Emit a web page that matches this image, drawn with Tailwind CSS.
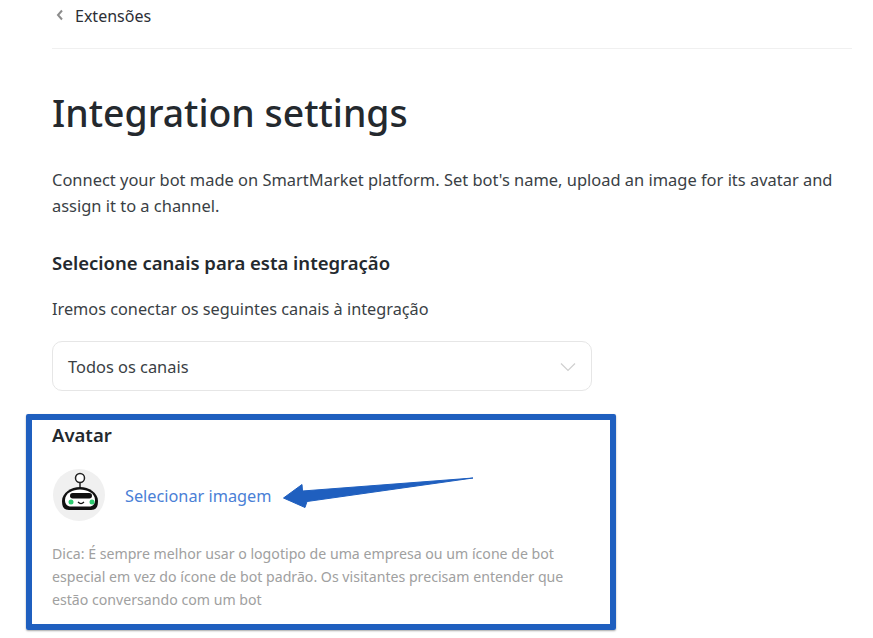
<!DOCTYPE html>
<html lang="en">
<head>
  <meta charset="UTF-8" />
  <title>Integration settings</title>
  <script src="https://cdn.jsdelivr.net/npm/@tailwindcss/browser@4"></script>
</head>
<body class="bg-white font-['Noto_Sans',sans-serif] text-[#24292e] overflow-hidden">
  <div class="w-[873px] h-[638px] overflow-hidden">
    <!-- Back link -->
    <div class="mx-[52px] w-[800px] h-[49px] border-b border-[#f0f0f0] flex items-start pt-[5px]">
      <svg class="w-[14px] h-[14px] mt-[3px] ml-[1px]" viewBox="0 0 14 14" fill="none" stroke="#8c8c8c" stroke-width="2">
        <path d="M9 2.5 L5 7 L9 11.5" />
      </svg>
      <span class="ml-[8px] text-[16px] leading-[22px] text-[#2c2f36]">Extensões</span>
    </div>

    <div class="pl-[52px]">
      <h1 class="mt-[38px] text-[37.4px] leading-[52px] font-medium text-[#24292e]">Integration settings</h1>
      <p class="mt-[28px] w-[805px] text-[16.45px] leading-[26px] text-[#3a3f45]">Connect your bot made on SmartMarket platform. Set bot's name, upload an image for its avatar and assign it to a channel.</p>
      <h2 class="mt-[30px] text-[18.5px] leading-[28px] font-semibold">Selecione canais para esta integração</h2>
      <p class="mt-[20px] text-[16.3px] leading-[24px] text-[#3a3f45]">Iremos conectar os seguintes canais à integração</p>

      <!-- Select -->
      <div class="mt-[20px] w-[540px] h-[50px] border border-[#e6e6e6] rounded-[10px] flex items-center justify-between pl-[15px] pr-[15px]">
        <span class="pt-[2px] text-[16.4px] text-[#3a3f45]">Todos os canais</span>
        <svg class="w-[16px] h-[10px] mt-[2px]" viewBox="0 0 16 10" fill="none" stroke="#cfcfcf" stroke-width="1.2">
          <path d="M1 1.5 L8 8.5 L15 1.5" />
        </svg>
      </div>
    </div>

    <!-- Highlighted avatar block -->
    <section class="mt-[23px] ml-[26px] w-[590px] h-[216px] border-[6px] border-[#1f5fbf] rounded-[2px] pl-[20px] shadow-[0_1px_2px_rgba(0,0,0,0.35)]">
      <h2 class="mt-[1px] text-[18.5px] leading-[28px] font-semibold">Avatar</h2>
      <div class="mt-[20px] flex items-center relative">
        <div class="ml-[1px] w-[52px] h-[52px] rounded-full bg-[#f0f0f0] flex items-center justify-center">
          <svg class="w-[52px] h-[52px]" viewBox="0 0 52 52">
            <circle cx="27" cy="9" r="4.500" fill="#fff" stroke="#222" stroke-width="1.500" />
            <path d="M27 13.500V19" stroke="#222" stroke-width="1.500" />
            <path d="M9 32 C9 24 18 18 27 18 C36 18 45 24 45 32 C45 38 43 41 38 41 H16 C11 41 9 38 9 32 Z" fill="#111" />
            <path d="M12 31 C12 24 20 20.500 27 20.500 C34 20.500 42 24 42 31 C42 35 40 37.500 36 37.500 H18 C14 37.500 12 35 12 31 Z" fill="#fff" />
            <rect x="17" y="24" width="22" height="5.500" rx="2.700" fill="#111" />
            <circle cx="18" cy="33" r="2.500" fill="#2ecc71" />
            <circle cx="39" cy="33" r="2.500" fill="#2ecc71" />
            <path d="M25 33 Q28 36 31 33" fill="none" stroke="#111" stroke-width="1.200" />
          </svg>
        </div>
        <a class="ml-[20px] pt-[2px] text-[16.3px] text-[#4a80d6]">Selecionar imagem</a>
        <!-- Annotation arrow -->
        <svg class="absolute left-[228px] top-[5px] w-[196px] h-[40px]" viewBox="0 0 196 40" fill="#1f5fbf" stroke="#1f5fbf" stroke-width="1" stroke-linejoin="round">
          <path d="M3.500 24 L22 10.500 L22.500 17 L193 4 L27 27.500 L25 33.500 Z" />
        </svg>
      </div>
      <p class="mt-[21px] w-[530px] text-[14.15px] leading-[23px] text-[#a0a0a0]">Dica: É sempre melhor usar o logotipo de uma empresa ou um ícone de bot especial em vez do ícone de bot padrão. Os visitantes precisam entender que estão conversando com um bot</p>
    </section>
  </div>
</body>
</html>
